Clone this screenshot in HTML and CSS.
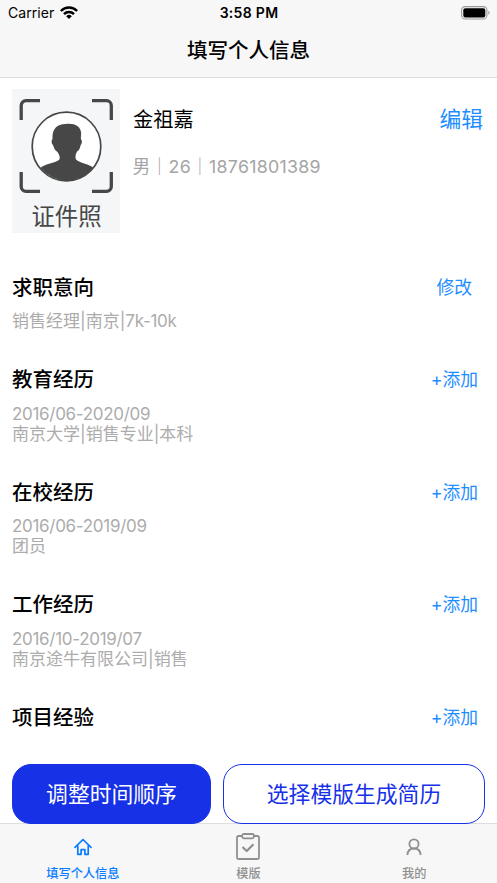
FILE: index.html
```html
<!DOCTYPE html>
<html lang="zh-CN">
<head>
<meta charset="utf-8">
<title>填写个人信息</title>
<link rel="stylesheet" href="styles.css">
</head>
<body>
<div class="app">
  <header class="top">
    <div class="status">
      <div class="carrier"><span>Carrier</span>
        <svg width="18" height="13" viewBox="0 0 18 13" fill="none" stroke="#000" stroke-width="2.5"><path d="M.9 5A11.3 11.3 0 0 1 17.1 5M4 8.2a7 7 0 0 1 10 0"/><path d="M9 13 6.2 10.2a4 4 0 0 1 5.6 0Z" fill="#000" stroke="none"/></svg>
      </div>
      <div class="clock">3:58 PM</div>
      <svg class="battery" width="29" height="14" viewBox="0 0 29 14"><rect x=".6" y=".6" width="25.3" height="12.4" rx="3.6" fill="none" stroke="#999" stroke-width="1.1"/><rect x="2.3" y="2.2" width="22" height="9.2" rx="2" fill="#000"/><path d="M27.3 4.8q1.3.6 1.3 2t-1.3 2Z" fill="#999"/></svg>
    </div>
    <h1><span>填写个人信息</span></h1>
  </header>
  <main>
    <section class="profile">
      <div class="photo">
        <svg width="94" height="94" viewBox="0 0 94 94"><g fill="none" stroke="#474747" stroke-width="3.3"><path d="M2.2 21V6.5a4.8 4.8 0 0 1 4.8-4.8H21M73 1.7h14.500a4.800 4.800 0 0 1 4.800 4.800V21M92.300 73v14.500a4.800 4.800 0 0 1-4.800 4.800H73M21 92.300H7a4.800 4.800 0 0 1-4.800-4.800V73"/><circle cx="47.500" cy="47.500" r="34.300" fill="#fff" stroke-width="1.700"/></g><path d="M21.500 69C26 64.500 34 65 40 61c1.500-2 .5-5-1.500-8C35.500 51 35 49 34 46c-2-2-1.500-5-.5-6-.5-10 4-14.500 13-15 9-1 14.500 2 15.500 8 .5 3-.5 5 0 7.500 1.500 1 1 4-.5 6-.5 3-2 5.500-3.500 6-1.500 3-2 6-1 8 5 4.500 13 4 17.500 8.500A34.500 34.500 0 0 1 21.500 69Z" fill="#474747"/></svg>
        <div>证件照</div>
      </div>
      <div class="person"><div class="name">金祖嘉</div><div class="meta">男｜26｜18761801389</div></div>
      <a class="edit">编辑</a>
    </section>
    <section class="entry"><div class="head"><h2>求职意向</h2><a class="modify">修改</a></div><p>销售经理|南京|<span class="num">7k-10k</span></p></section>
    <section class="entry"><div class="head"><h2>教育经历</h2><a>+添加</a></div><p class="num">2016/06-2020/09</p><p>南京大学|销售专业|本科</p></section>
    <section class="entry"><div class="head"><h2>在校经历</h2><a>+添加</a></div><p class="num">2016/06-2019/09</p><p>团员</p></section>
    <section class="entry"><div class="head"><h2>工作经历</h2><a>+添加</a></div><p class="num">2016/10-2019/07</p><p>南京途牛有限公司|销售</p></section>
    <section class="entry"><div class="head"><h2>项目经验</h2><a>+添加</a></div></section>
  </main>
  <div class="actions"><button class="primary">调整时间顺序</button><button class="outline">选择模版生成简历</button></div>
  <nav>
    <a class="active"><div class="icon"><svg width="18" height="18" viewBox="0 0 18 18" fill="none" stroke="#087cff" stroke-width="1.7" stroke-linejoin="round" stroke-linecap="round"><path d="M1 9.300 9 1.500l8 7.800M3.800 8v8.300h3.300v-4.600h3.800v4.600h3.300V8"/></svg></div><span>填写个人信息</span></a>
    <a><div class="icon"><svg width="24" height="28" viewBox="0 0 24 28" fill="none" stroke="#8f8f8f" stroke-width="1.8" stroke-linejoin="round"><path d="M6 3H2.500A1.500 1.500 0 0 0 1 4.500v20A1.500 1.500 0 0 0 2.500 26h19a1.500 1.500 0 0 0 1.500-1.500v-20A1.500 1.500 0 0 0 21.500 3H18"/><rect x="6" y="1" width="12" height="4.3" rx="2"/><path d="m6.500 14 4.200 4 6.800-6.800" stroke-width="2.2"/></svg></div><span>模版</span></a>
    <a><div class="icon"><svg width="16" height="18" viewBox="0 0 16 18" fill="none" stroke="#8f8f8f" stroke-width="1.8"><circle cx="8" cy="5.9" r="4.6"/><path d="M1.400 17c.2-4 2.700-6.500 6.600-6.500s6.400 2.500 6.600 6.500"/></svg></div><span>我的</span></a>
  </nav>
</div>
</body>
</html>
```
FILE: styles.css
```css
* { box-sizing: border-box; margin: 0; padding: 0; }
body { background: #fff; color: #000; font-family: Inter, "Noto Sans CJK SC", sans-serif; }
svg { display: block; flex: none; }
.app { width: 497px; height: 883px; display: flex; flex-direction: column; overflow: hidden; }
.top { height: 78px; background: #f7f7f7; border-bottom: 1px solid #dedede; flex: none; }
.status { height: 25px; display: grid; grid-template-columns: 1fr auto 1fr; align-items: center; padding: 0 7px 0 8px; font-size: 14px; line-height: 25px; }
.carrier { display: flex; align-items: center; gap: 6px; letter-spacing: .05px; }
.clock { font-weight: 600; letter-spacing: .3px; }
.battery { justify-self: end; }
h1 { height: 52px; line-height: 52px; text-align: center; font-size: 20.5px; font-weight: 500; }
main { flex: 1; min-height: 0; padding: 11px 12px 0; }
.profile { display: flex; height: 183px; }
.photo { width: 108px; height: 144px; background: #f5f6f8; display: flex; flex-direction: column; align-items: center; padding-top: 10px; color: #474747; font-size: 23.4px; line-height: 48px; }
.photo div { padding-left: 1px; }
.person { flex: 1; padding-left: 13px; }
.name { font-size: 20.2px; line-height: 30px; margin-top: 16px; }
.meta { font-size: 17.8px; letter-spacing: .27px; line-height: 24px; margin-top: 20px; margin-left: -.5px; color: #a5a5a5; white-space: nowrap; }
a { color: #1e8dff; }
.edit { font-size: 21.8px; line-height: 32px; margin: 14px 2px 0 0; }
.entry { padding-bottom: 33px; }
.head { display: flex; justify-content: space-between; height: 30px; line-height: 31px; margin-bottom: 9.3px; }
.head a { font-size: 17.8px; padding-right: 7px; }
.head .modify { padding-right: 13px; }
h2 { font-size: 20.5px; font-weight: 500; }
.entry p { font-size: 17px; line-height: 20.1px; color: #acacac; }
.entry .num { letter-spacing: -.3px; }
.actions { position: relative; z-index: 1; display: grid; grid-template-columns: 199px 262px; gap: 12px; height: 60px; margin: 0 12px -1px; flex: none; }
button { border: 1px solid #1731e7; border-radius: 19px; padding-bottom: 4px; font: 21.8px Inter, "Noto Sans CJK SC", sans-serif; }
.primary { background: #1731e7; color: #fff; }
.outline { background: #fff; color: #1731e7; }
nav { height: 60px; flex: none; background: #f7f7f7; border-top: 1px solid #dedede; display: grid; grid-template-columns: repeat(3, 1fr); }
nav a { display: flex; flex-direction: column; align-items: center; color: #8f8f8f; font-size: 12.2px; line-height: 14px; font-weight: 500; }
nav .active { color: #087cff; }
.icon { height: 43px; padding-top: 3px; display: flex; align-items: center; }
```
